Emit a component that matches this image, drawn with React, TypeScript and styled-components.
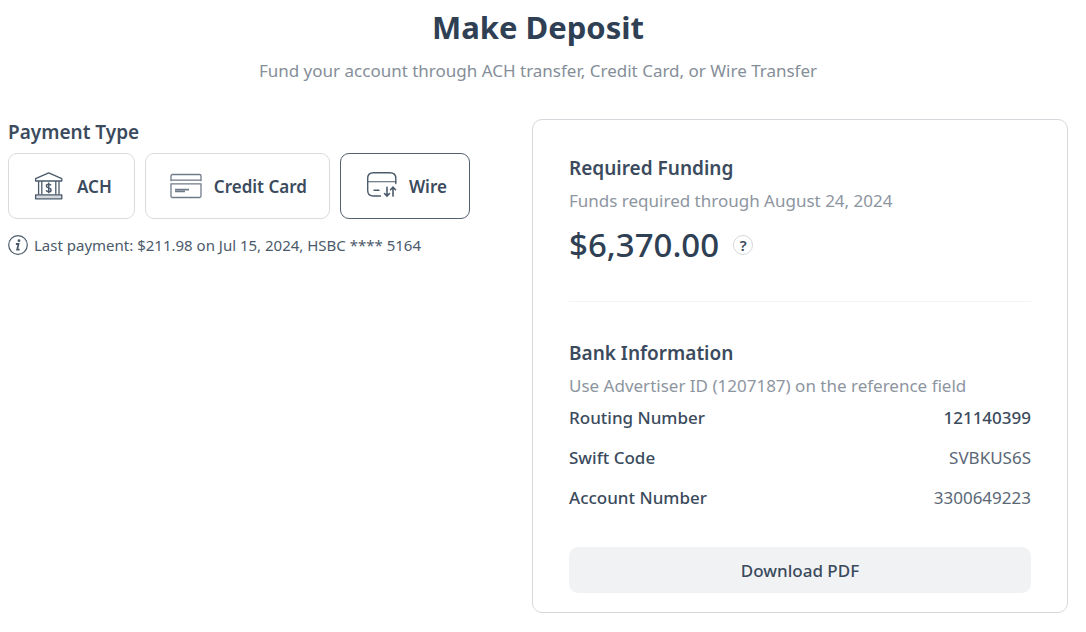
import React, { useState } from "react";
import styled, { createGlobalStyle } from "styled-components";

const GlobalStyle = createGlobalStyle`
  *, *::before, *::after { box-sizing: border-box; }
  body {
    margin: 0;
    background: #fff;
    color: #3b4b5d;
    font-family: "Noto Sans", "Open Sans", sans-serif;
    font-size: 17px;
    line-height: 24px;
  }
  button { font-family: inherit; color: inherit; cursor: pointer; }
`;

const Page = styled.main`
  padding: 4px 18px 18px 8px;
`;

const Header = styled.header`
  text-align: center;
  padding-bottom: 36px;
`;

const Title = styled.h1`
  margin: 0;
  font-size: 31px;
  line-height: 47px;
  font-weight: 700;
  color: #2f4054;
`;

const Lead = styled.p`
  margin: 8px 0 0;
  color: #858e99;
`;

const Columns = styled.div`
  display: grid;
  grid-template-columns: 61fr 67fr;
  column-gap: 36px;
  align-items: start;
`;

const SectionTitle = styled.h2`
  margin: 0;
  font-size: 19px;
  line-height: 26px;
  font-weight: 600;
`;

const Options = styled.div`
  display: flex;
  gap: 10px;
  margin: 8px 0 14px;
`;

const Option = styled.button<{ $selected: boolean }>`
  display: flex;
  align-items: center;
  gap: 12px;
  height: 66px;
  padding: 0 22px 0 24px;
  background: #fff;
  border: 1px solid ${(p) => (p.$selected ? "#536070" : "#d9dcdf")};
  border-radius: 9px;
  font-size: 17px;
  font-weight: 600;
  white-space: nowrap;
`;

const Note = styled.p`
  display: flex;
  align-items: center;
  gap: 6px;
  margin: 0;
  font-size: 15px;
  color: #4b5a6b;
`;

const Card = styled.section`
  padding: 35px 36px 19px;
  border: 1px solid #d5d8dc;
  border-radius: 10px;
`;

const Hint = styled.p`
  margin: 8px 0 0;
  color: #8d959f;
`;

const AmountRow = styled.div`
  display: flex;
  align-items: center;
  gap: 14px;
  margin-top: 8px;
  padding-bottom: 32px;
  border-bottom: 1px solid #f3f4f5;
  margin-bottom: 38px;
`;

const Amount = styled.span`
  font-size: 33px;
  line-height: 48px;
  font-weight: 500;
  color: #2f4054;
`;

const HelpButton = styled.button`
  width: 20px;
  height: 20px;
  padding: 0;
  border: 1px solid #d5d8dc;
  border-radius: 50%;
  background: #fff;
  font-size: 15px;
  line-height: 16px;
  font-weight: 600;
`;

const Details = styled.dl`
  margin: 0 0 29px;
`;

const Detail = styled.div`
  display: flex;
  justify-content: space-between;
  line-height: 40px;
`;

const Term = styled.dt`
  font-weight: 500;
`;

const Value = styled.dd<{ $strong?: boolean }>`
  margin: 0;
  font-weight: ${(p) => (p.$strong ? 500 : 400)};
  color: ${(p) => (p.$strong ? "#3b4b5d" : "#5a6775")};
`;

const DownloadButton = styled.button`
  width: 100%;
  height: 46px;
  border: 0;
  border-radius: 9px;
  background: #f1f2f4;
  font-size: 17px;
  font-weight: 500;
`;

const Icon = styled.svg<{ $tone?: string }>`
  flex: none;
  fill: none;
  stroke: ${(p) => p.$tone ?? "#4b5a6b"};
`;

const BankIcon = () => (
  <Icon width="32" height="32" viewBox="0 0 32 32" strokeWidth="1.3" strokeLinejoin="round" aria-hidden="true">
    <path d="M2.6 8.7 15.7 2.9 28.8 8.7V11H2.6Z" />
    <path d="M5.6 11v13.5M8.8 11v13.5M22.8 11v13.5M26 11v13.5" />
    <path d="M2.6 24.8h26.2V28.8H2.6Z" fill="#d5d9de" />
    <path
      d="M18 15.4c-.4-.8-1.2-1.2-2.3-1.2-1.4 0-2.3.7-2.3 1.8 0 2.5 4.7 1.3 4.7 3.9 0 1.1-1 1.8-2.4 1.8-1.2 0-2.1-.5-2.5-1.4M15.7 12.6v10.6"
      strokeWidth="1.5"
    />
  </Icon>
);

const CardIcon = () => (
  <Icon width="32" height="32" viewBox="0 0 32 32" strokeWidth="1.3" $tone="#707b89" aria-hidden="true">
    <path d="M1 11.2V6q0-1.5 1.5-1.5h27q1.5 0 1.5 1.5v5.2M1 10.2h30" />
    <path d="M1 13.8h30V26q0 1.5-1.5 1.5h-27Q1 27.5 1 26Z" />
    <path d="M5 19.6h14M5 21.5h10" strokeWidth="1.7" />
  </Icon>
);

const WireIcon = () => (
  <Icon width="32" height="32" viewBox="0 0 32 32" strokeWidth="1.4" strokeLinecap="round" aria-hidden="true">
    <path d="M15.5 26H8.5Q2.7 26 2.7 20.5V8.5Q2.7 2.8 8.5 2.8h16.5Q30.8 2.8 30.8 8.5v5" />
    <path d="M2.7 11.8h28.1" strokeWidth="1.1" />
    <path d="M9 20.3h5" />
    <path d="M22 17.2v8.7M19.5 23.5l2.5 2.6 2.5-2.6M28 26.1v-8.7M25.5 19.7l2.5-2.5 2.5 2.5" strokeWidth="1.6" />
  </Icon>
);

const InfoIcon = () => (
  <Icon width="20" height="20" viewBox="0 0 20 20" aria-hidden="true">
    <circle cx="10" cy="10" r="9.3" strokeWidth="1.2" />
    <circle cx="11" cy="5.7" r="1.4" fill="#4b5a6b" stroke="none" />
    <path d="M7.9 9h2.6L9.2 14.7h2.4" strokeWidth="1.8" />
  </Icon>
);

const methods = [
  { id: "ach", label: "ACH", icon: <BankIcon /> },
  { id: "card", label: "Credit Card", icon: <CardIcon /> },
  { id: "wire", label: "Wire", icon: <WireIcon /> },
];

const bankDetails = [
  { term: "Routing Number", value: "121140399", strong: true },
  { term: "Swift Code", value: "SVBKUS6S" },
  { term: "Account Number", value: "3300649223" },
];

export default function App() {
  const [method, setMethod] = useState("wire");
  return (
    <>
      <GlobalStyle />
      <Page>
        <Header>
          <Title>Make Deposit</Title>
          <Lead>Fund your account through ACH transfer, Credit Card, or Wire Transfer</Lead>
        </Header>
        <Columns>
          <section>
            <SectionTitle id="payment-type">Payment Type</SectionTitle>
            <Options role="group" aria-labelledby="payment-type">
              {methods.map((m) => (
                <Option
                  key={m.id}
                  type="button"
                  $selected={m.id === method}
                  aria-pressed={m.id === method}
                  onClick={() => setMethod(m.id)}
                >
                  {m.icon}
                  {m.label}
                </Option>
              ))}
            </Options>
            <Note>
              <InfoIcon />
              Last payment: $211.98 on Jul 15, 2024, HSBC **** 5164
            </Note>
          </section>
          <Card>
            <SectionTitle>Required Funding</SectionTitle>
            <Hint>Funds required through August 24, 2024</Hint>
            <AmountRow>
              <Amount>$6,370.00</Amount>
              <HelpButton type="button" aria-label="About required funding">?</HelpButton>
            </AmountRow>
            <SectionTitle>Bank Information</SectionTitle>
            <Hint>Use Advertiser ID (1207187) on the reference field</Hint>
            <Details>
              {bankDetails.map((d) => (
                <Detail key={d.term}>
                  <Term>{d.term}</Term>
                  <Value $strong={d.strong}>{d.value}</Value>
                </Detail>
              ))}
            </Details>
            <DownloadButton type="button">Download PDF</DownloadButton>
          </Card>
        </Columns>
      </Page>
    </>
  );
}
